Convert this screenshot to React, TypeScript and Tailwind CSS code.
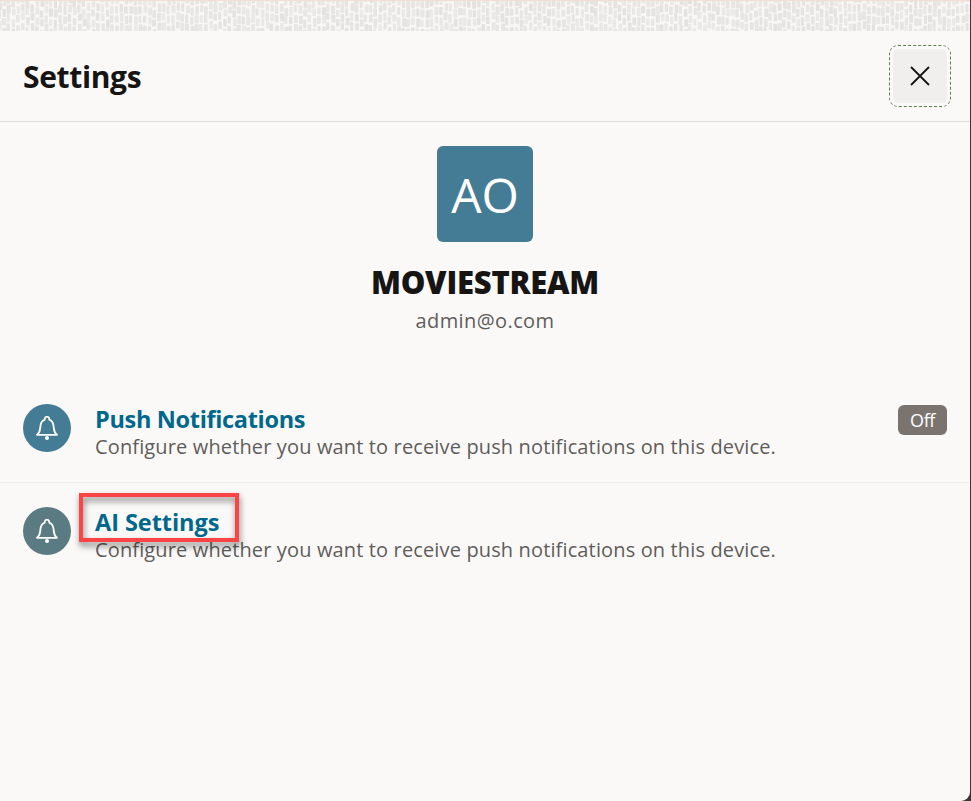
import type { ReactNode } from "react";

type Stroke = { x: number; y: number; w: number; h: number; o: number };

// Brushed fabric texture of the page header behind the drawer.
function makeStrokes(): Stroke[] {
  let seed = 41;
  const rnd = () => {
    seed = (seed * 16807) % 2147483647;
    return seed / 2147483647;
  };
  const list: Stroke[] = [];
  for (let x = -3; x < 972; x += 4.7) {
    for (let y = -9 + rnd() * 8; y < 30; y += 9.5) {
      list.push({
        x: x + rnd() * 1.2,
        y: y + rnd() * 1.5,
        w: 3 + rnd() * 1.2,
        h: 7 + rnd() * 2,
        o: 0.65 + rnd() * 0.35,
      });
    }
  }
  return list;
}

const strokes = makeStrokes();

function Texture() {
  return (
    <svg className="block h-[30px] w-full" viewBox="0 0 970 30" preserveAspectRatio="none">
      <defs>
        <filter id="soften" x="0" y="0" width="1" height="1">
          <feGaussianBlur stdDeviation="0.55" />
        </filter>
      </defs>
      <rect width="970" height="30" fill="#f8f7f5" />
      <g filter="url(#soften)" fill="#e3e2e0">
        {strokes.map((s, i) => (
          <rect key={i} x={s.x} y={s.y} width={s.w} height={s.h} rx={1.2} opacity={s.o} />
        ))}
      </g>
    </svg>
  );
}

function Bell() {
  return (
    <svg className="size-6" viewBox="0 0 24 24" fill="none" stroke="#fff" strokeWidth="1.8" strokeLinejoin="round">
      <path d="M2 18.8H22C19.8 17.2 19.1 15.2 18.8 12.2L18.4 9.2C18 6.2 16.4 4.4 14.4 3.8C14.3 1.9 13.4 0.7 12 0.7S9.7 1.9 9.6 3.8C7.6 4.4 6 6.2 5.6 9.2L5.2 12.2C4.9 15.2 4.2 17.2 2 18.8Z" />
      <circle cx="12" cy="22" r="2" fill="#fff" stroke="none" />
    </svg>
  );
}

function Item({ tint, title, badge }: { tint: string; title: ReactNode; badge?: string }) {
  return (
    <div className="flex items-start px-[23px] pt-[21px]">
      <div className={`flex size-12 shrink-0 items-center justify-center rounded-full ${tint}`}>
        <Bell />
      </div>
      <div className="ml-6 flex-1">
        <div className="h-[29px] text-[23.5px] font-bold leading-[31px] text-[#00688c]">{title}</div>
        <div className="whitespace-nowrap text-[20px] leading-7 tracking-[0.138px] text-[#5f5d5a]">
          Configure whether you want to receive push notifications on this device.
        </div>
      </div>
      {badge && (
        <div className="mt-px flex h-[30px] w-[49px] items-center justify-center rounded-[6px] bg-[#7b736e] text-[18px] tracking-[-0.4px] text-white">
          {badge}
        </div>
      )}
    </div>
  );
}

export default function App() {
  return (
    <div className="h-[801px] w-[971px] overflow-hidden bg-[#373635] pr-px font-['Open_Sans','Noto_Sans',sans-serif]">
      <div className="flex h-[801px] flex-col overflow-hidden rounded-br-[9px] bg-[#fbf9f8]">
        <div className="h-px shrink-0 bg-[#f5ddd6]" />
        <Texture />
        <header className="flex h-[91px] shrink-0 items-center justify-between border-b border-[#dfdddb] pl-[23px] pr-[19px]">
          <h1 className="pt-0.5 text-[30px] font-bold leading-10 tracking-[-0.35px] text-[#161513]">Settings</h1>
          <button className="flex size-[62px] items-center justify-center rounded-[9px] border border-dashed border-[#5b7d49]">
            <span className="flex size-[54px] items-center justify-center rounded-[5px] bg-[#f1efed]">
              <svg className="size-[20px]" viewBox="0 0 20 20" fill="none" stroke="#161513" strokeWidth="1.8">
                <path d="M1 1L19 19M19 1L1 19" />
              </svg>
            </span>
          </button>
        </header>
        <section className="flex h-[261px] shrink-0 flex-col items-center pt-6">
          <div className="flex size-24 items-center justify-center rounded-[6px] bg-[#457c95] pt-0.5 text-[48px] text-white">
            AO
          </div>
          <h2 className="mt-5 text-[31px] font-extrabold leading-10 tracking-[-0.22px] text-[#161513]">MOVIESTREAM</h2>
          <p className="mt-[5px] text-[20px] leading-7 tracking-[0.4px] text-[#5f5d5a]">admin@o.com</p>
        </section>
        <div className="h-[100px] shrink-0 border-b border-[#f0eeec]">
          <Item tint="bg-[#457c95]" title={<span className="tracking-[-0.33px]">Push Notifications</span>} badge="Off" />
        </div>
        <div className="relative pt-[3px]">
          <Item tint="bg-[#5b7b83]" title={<span className="tracking-[-0.05px]">AI Settings</span>} />
          <div className="absolute left-[79px] top-[10px] h-[49px] w-[160px] border-4 border-[#fc4444] drop-shadow-[1px_4px_3px_rgba(0,0,0,0.5)]" />
        </div>
      </div>
    </div>
  );
}
